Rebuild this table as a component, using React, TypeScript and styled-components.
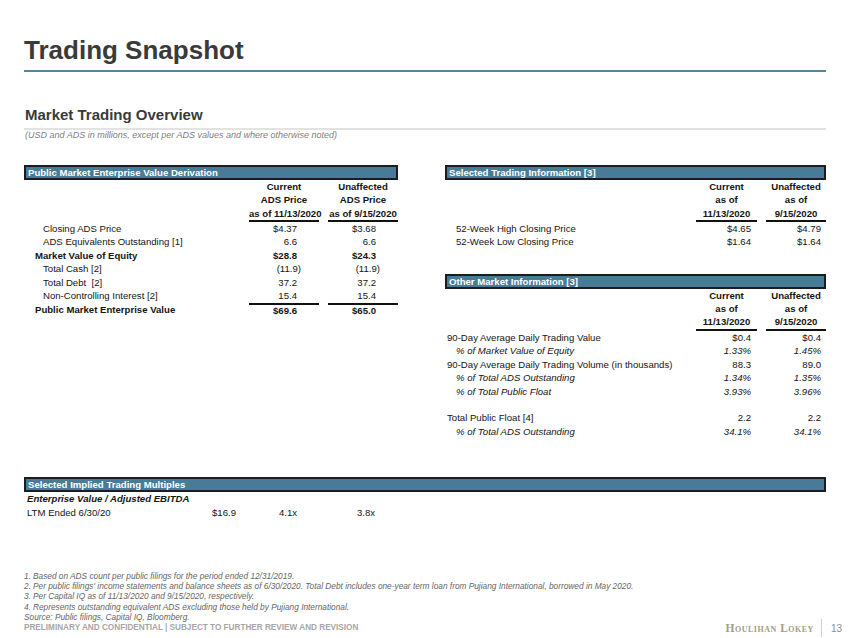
import React from 'react';
import styled, { createGlobalStyle } from 'styled-components';

const Global = createGlobalStyle`
  html, body { margin: 0; padding: 0; background: #fff; }
  body { font-family: "Liberation Sans", Arial, sans-serif; }
`;

const Page = styled.div`
  width: 850px;
  height: 638px;
  box-sizing: border-box;
  padding: 35px 24px 5px;
  display: flex;
  flex-direction: column;
  overflow: hidden;
  color: #141414;
`;

const Title = styled.h1`
  margin: 0;
  font-size: 26px;
  line-height: 30px;
  font-weight: 700;
  color: #3a3a3a;
  padding-bottom: 5px;
  border-bottom: 2px solid #55839f;
`;

const SectionHead = styled.h2`
  margin: 34px 0 0;
  font-size: 15px;
  line-height: 18px;
  font-weight: 700;
  color: #3a3a3a;
  padding: 0 0 4px 1px;
  border-bottom: 2px solid #e2e2e2;
`;

const Note = styled.div`
  font-size: 9px;
  line-height: 10px;
  font-style: italic;
  color: #808080;
  padding-left: 1px;
`;

const Columns = styled.div`
  margin-top: 25px;
  display: grid;
  grid-template-columns: 374px 381px;
  column-gap: 47px;
  align-items: start;
`;

const Stack = styled.div`
  display: flex;
  flex-direction: column;
  gap: 25px;
`;

const Bar = styled.div`
  height: 15px;
  box-sizing: border-box;
  background: #477b97;
  border: 2px solid #1c1c1c;
  color: #fff;
  font-size: 9.6px;
  font-weight: 700;
  line-height: 11px;
  padding-left: 2px;
  white-space: nowrap;
`;

const DataGrid = styled.div<{ $cols: string }>`
  display: grid;
  grid-template-columns: ${p => p.$cols};
  column-gap: 9px;
  font-size: 9.6px;
`;

const HeadCell = styled.div<{ $rule?: boolean }>`
  font-weight: 700;
  text-align: center;
  line-height: 13.3px;
  border-bottom: 2px solid ${p => (p.$rule ? '#111' : 'transparent')};
  white-space: nowrap;
`;

const Label = styled.div<{ $indent: number; $bold?: boolean; $italic?: boolean }>`
  line-height: 13.5px;
  padding-left: ${p => p.$indent}px;
  font-weight: ${p => (p.$bold ? 700 : 400)};
  font-style: ${p => (p.$italic ? 'italic' : 'normal')};
  white-space: pre;
`;

const Value = styled.div<{ $pad: number; $bold?: boolean; $italic?: boolean; $top?: boolean }>`
  text-align: right;
  padding-right: ${p => p.$pad}px;
  font-weight: ${p => (p.$bold ? 700 : 400)};
  font-style: ${p => (p.$italic ? 'italic' : 'normal')};
  border-top: ${p => (p.$top ? '2px solid #111' : 'none')};
  line-height: ${p => (p.$top ? '11.5px' : '13.5px')};
  white-space: nowrap;
`;

const Neg = styled.span`
  margin-right: -4px;
`;

const Blank = styled.div`
  height: 13px;
  grid-column: 1 / -1;
`;

const Multiples = styled.div`
  margin-top: 39px;
`;

const MultGrid = styled.div`
  display: grid;
  grid-template-columns: 185px 67px 78px 1fr;
  padding-left: 3px;
  font-size: 9.6px;
  line-height: 13.5px;
`;

const MultTitle = styled.div`
  grid-column: 1 / -1;
  font-weight: 700;
  font-style: italic;
`;

const Footer = styled.div`
  margin-top: auto;
  display: flex;
  justify-content: space-between;
  align-items: flex-end;
`;

const Notes = styled.div`
  display: flex;
  flex-direction: column;
  font-size: 8.3px;
  line-height: 10.4px;
  font-style: italic;
  color: #666;
`;

const NoteRow = styled.div`
  display: flex;
  white-space: nowrap;
`;

const NoteNum = styled.span`
  width: 9px;
  flex: none;
`;

const Confidential = styled.div`
  font-style: normal;
  font-weight: 700;
  font-size: 8.2px;
  color: #a6a6a6;
`;

const Brand = styled.div`
  display: flex;
  align-items: center;
  height: 18px;
  margin: 0 -16px -4px 0;
`;

const BrandName = styled.span`
  font-family: "Liberation Serif", "Times New Roman", serif;
  font-variant: small-caps;
  font-size: 11.5px;
  letter-spacing: 0.5px;
  color: #a59b88;
  font-weight: 700;
`;

const Divider = styled.span`
  width: 1px;
  height: 18px;
  background: #cfcfcf;
  margin: 0 9px 0 7px;
`;

const PageNum = styled.span`
  font-size: 10px;
  color: #8d8d8d;
`;

type Row = { label: string; indent: number; bold?: boolean; italic?: boolean; a: string; b: string; top?: boolean };

const num = (v: string) => (v.startsWith('(') ? <Neg>{v}</Neg> : v);

const evRows: Row[] = [
  { label: 'Closing ADS Price', indent: 19, a: '$4.37', b: '$3.68' },
  { label: 'ADS Equivalents Outstanding [1]', indent: 19, a: '6.6', b: '6.6' },
  { label: 'Market Value of Equity', indent: 11, bold: true, a: '$28.8', b: '$24.3' },
  { label: 'Total Cash [2]', indent: 19, a: '(11.9)', b: '(11.9)' },
  { label: 'Total Debt  [2]', indent: 19, a: '37.2', b: '37.2' },
  { label: 'Non-Controlling Interest [2]', indent: 19, a: '15.4', b: '15.4' },
  { label: 'Public Market Enterprise Value', indent: 11, bold: true, a: '$69.6', b: '$65.0', top: true },
];

const tradingRows: Row[] = [
  { label: '52-Week High Closing Price', indent: 11, a: '$4.65', b: '$4.79' },
  { label: '52-Week Low Closing Price', indent: 11, a: '$1.64', b: '$1.64' },
];

const otherRows: (Row | null)[] = [
  { label: '90-Day Average Daily Trading Value', indent: 2, a: '$0.4', b: '$0.4' },
  { label: '% of Market Value of Equity', indent: 11, italic: true, a: '1.33%', b: '1.45%' },
  { label: '90-Day Average Daily Trading Volume (in thousands)', indent: 2, a: '88.3', b: '89.0' },
  { label: '% of Total ADS Outstanding', indent: 11, italic: true, a: '1.34%', b: '1.35%' },
  { label: '% of Total Public Float', indent: 11, italic: true, a: '3.93%', b: '3.96%' },
  null,
  { label: 'Total Public Float [4]', indent: 2, a: '2.2', b: '2.2' },
  { label: '% of Total ADS Outstanding', indent: 11, italic: true, a: '34.1%', b: '34.1%' },
];

const Rows: React.FC<{ rows: (Row | null)[]; padA: number; padB: number }> = ({ rows, padA, padB }) => (
  <>
    {rows.map((r, i) =>
      r === null ? (
        <Blank key={i} />
      ) : (
        <React.Fragment key={i}>
          <Label $indent={r.indent} $bold={r.bold} $italic={r.italic}>{r.label}</Label>
          <Value $pad={padA} $bold={r.bold} $italic={r.italic} $top={r.top}>{num(r.a)}</Value>
          <Value $pad={padB} $bold={r.bold} $italic={r.italic} $top={r.top}>{num(r.b)}</Value>
        </React.Fragment>
      )
    )}
  </>
);

const Heads: React.FC<{ a: string[]; b: string[] }> = ({ a, b }) => (
  <>
    <HeadCell />
    <HeadCell $rule>{a.map((t, i) => <div key={i}>{t}</div>)}</HeadCell>
    <HeadCell $rule>{b.map((t, i) => <div key={i}>{t}</div>)}</HeadCell>
  </>
);

const notes = [
  'Based on ADS count per public filings for the period ended 12/31/2019.',
  "Per public filings' income statements and balance sheets as of 6/30/2020. Total Debt includes one-year term loan from Pujiang International, borrowed in May 2020.",
  'Per Capital IQ as of 11/13/2020 and 9/15/2020, respectively.',
  'Represents outstanding equivalent ADS excluding those held by Pujiang International.',
];

export default function App() {
  return (
    <>
      <Global />
      <Page>
        <Title>Trading Snapshot</Title>
        <SectionHead>Market Trading Overview</SectionHead>
        <Note>(USD and ADS in millions, except per ADS values and where otherwise noted)</Note>

        <Columns>
          <div>
            <Bar>Public Market Enterprise Value Derivation</Bar>
            <DataGrid $cols="216px 70px 70px">
              <Heads a={['Current', 'ADS Price', 'as of 11/13/2020']} b={['Unaffected', 'ADS Price', 'as of 9/15/2020']} />
              <Rows rows={evRows} padA={22} padB={22} />
            </DataGrid>
          </div>

          <Stack>
            <div>
              <Bar>Selected Trading Information [3]</Bar>
              <DataGrid $cols="242px 61px 60px">
                <Heads a={['Current', 'as of', '11/13/2020']} b={['Unaffected', 'as of', '9/15/2020']} />
                <Rows rows={tradingRows} padA={6} padB={5} />
              </DataGrid>
            </div>
            <div>
              <Bar>Other Market Information [3]</Bar>
              <DataGrid $cols="242px 61px 60px">
                <Heads a={['Current', 'as of', '11/13/2020']} b={['Unaffected', 'as of', '9/15/2020']} />
                <Rows rows={otherRows} padA={6} padB={5} />
              </DataGrid>
            </div>
          </Stack>
        </Columns>

        <Multiples>
          <Bar>Selected Implied Trading Multiples</Bar>
          <MultGrid>
            <MultTitle>Enterprise Value / Adjusted EBITDA</MultTitle>
            <div>LTM Ended 6/30/20</div>
            <div>$16.9</div>
            <div>4.1x</div>
            <div>3.8x</div>
          </MultGrid>
        </Multiples>

        <Footer>
          <Notes>
            {notes.map((n, i) => (
              <NoteRow key={i}>
                <NoteNum>{i + 1}.</NoteNum>
                <span>{n}</span>
              </NoteRow>
            ))}
            <NoteRow>Source: Public filings, Capital IQ, Bloomberg.</NoteRow>
            <Confidential>PRELIMINARY AND CONFIDENTIAL | SUBJECT TO FURTHER REVIEW AND REVISION</Confidential>
          </Notes>
          <Brand>
            <BrandName>Houlihan Lokey</BrandName>
            <Divider />
            <PageNum>13</PageNum>
          </Brand>
        </Footer>
      </Page>
    </>
  );
}
